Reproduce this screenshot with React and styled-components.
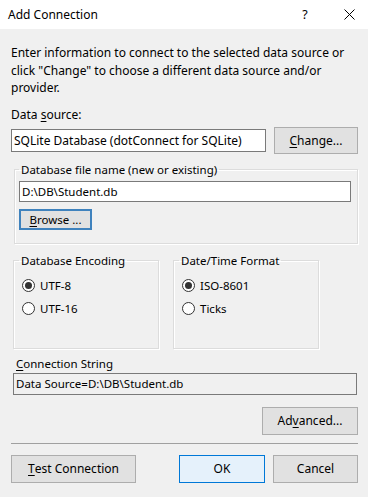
import React from "react";
import styled, { createGlobalStyle } from "styled-components";

const GlobalStyle = createGlobalStyle`
  html, body {
    margin: 0;
    padding: 0;
    background: #f0f0f0;
  }
  * {
    box-sizing: border-box;
  }
`;

const Dialog = styled.div`
  width: 368px;
  height: 497px;
  background: #f0f0f0;
  font-family: "Noto Sans", "Open Sans", sans-serif;
  font-size: 12px;
  color: #000;
  display: flex;
  flex-direction: column;
  overflow: hidden;
`;

const TitleBar = styled.div`
  height: 29px;
  flex: none;
  background: #fff;
  display: flex;
  align-items: center;
  padding-left: 8px;
  padding-right: 4px;
`;

const Title = styled.div`
  flex: 1;
  font-size: 12px;
  white-space: nowrap;
  color: #000;
`;

const TitleButton = styled.div`
  width: 30px;
  height: 29px;
  display: flex;
  align-items: center;
  justify-content: center;
  font-size: 12.5px;
  margin-right: ${(p) => p.$gap || 0}px;
`;

const Body = styled.div`
  padding: 15px 10px 0 11px;
  display: flex;
  flex-direction: column;
`;

const Intro = styled.p`
  margin: 0;
  line-height: 17.5px;
`;

const FieldLabel = styled.div`
  margin-top: ${(p) => p.$top || 0}px;
  line-height: 17px;
  font-size: ${(p) => p.$size || 12}px;
  padding-left: ${(p) => p.$indent || 0}px;
`;

const Row = styled.div`
  display: flex;
  align-items: center;
  justify-content: ${(p) => p.$justify || "flex-start"};
  gap: ${(p) => p.$gap || 0}px;
  margin-top: ${(p) => p.$top || 0}px;
`;

const TextBox = styled.div`
  height: ${(p) => p.$h || 23}px;
  flex: ${(p) => (p.$w ? "none" : "1")};
  width: ${(p) => (p.$w ? `${p.$w}px` : "auto")};
  border: 1px solid #7a7a7a;
  background: ${(p) => (p.$readonly ? "#f0f0f0" : "#fff")};
  display: flex;
  align-items: center;
  padding-left: 2px;
  font-size: ${(p) => p.$size || 12}px;
  white-space: nowrap;
  overflow: hidden;
`;

const Button = styled.div`
  width: ${(p) => p.$w}px;
  height: ${(p) => p.$h || 28}px;
  flex: none;
  background: ${(p) => (p.$primary ? "#e5f1fb" : "#e1e1e1")};
  border: ${(p) => (p.$focus ? "2px solid #3f82bd" : p.$primary ? "1px solid #0078d7" : "1px solid #adadad")};
  display: flex;
  align-items: center;
  justify-content: center;
  font-size: ${(p) => p.$size || 12}px;
`;

const GroupBox = styled.fieldset`
  margin: ${(p) => p.$margin || "0"};
  padding: ${(p) => p.$pad || "0"};
  width: ${(p) => (p.$w ? `${p.$w}px` : "auto")};
  height: ${(p) => p.$h}px;
  border: 1px solid #dcdcdc;
  box-shadow: inset 1px 1px 0 #fff, 1px 1px 0 #fff;
  min-width: 0;
`;

const Legend = styled.legend`
  padding: 0 2px;
  margin-left: ${(p) => p.$offset || 0}px;
  font-size: 11.5px;
  line-height: 14px;
`;

const RadioRow = styled.label`
  display: flex;
  align-items: center;
  gap: 5px;
  height: 23px;
  font-size: 11.5px;
`;

const RadioCircle = styled.span`
  width: 13px;
  height: 13px;
  border-radius: 50%;
  border: 1px solid #333;
  background: #fff;
  display: flex;
  align-items: center;
  justify-content: center;

  &::after {
    content: "";
    width: 7px;
    height: 7px;
    border-radius: 50%;
    background: ${(p) => (p.$checked ? "#333" : "transparent")};
  }
`;

const Separator = styled.div`
  height: 1px;
  background: #a0a0a0;
  margin-top: 8px;
`;

const U = styled.span`
  text-decoration: underline;
  text-underline-offset: 2px;
`;

function Radio({ checked, children }) {
  return (
    <RadioRow>
      <RadioCircle $checked={checked} />
      {children}
    </RadioRow>
  );
}

function CloseIcon() {
  return (
    <svg width="11" height="11" viewBox="0 0 11 11">
      <path d="M0.5 0.5L10.5 10.5M10.5 0.5L0.5 10.5" stroke="#000" strokeWidth="1" />
    </svg>
  );
}

export default function App() {
  return (
    <>
      <GlobalStyle />
      <Dialog>
        <TitleBar>
          <Title>Add Connection</Title>
          <TitleButton $gap={14}>?</TitleButton>
          <TitleButton>
            <CloseIcon />
          </TitleButton>
        </TitleBar>
        <Body>
          <Intro>
            Enter information to connect to the selected data source or click "Change" to choose a different data source and/or provider.
          </Intro>
          <FieldLabel $top={9}>
            Data <U>s</U>ource:
          </FieldLabel>
          <Row $gap={8} $top={4}>
            <TextBox $w={255} $h={23}>SQLite Database (dotConnect for SQLite)</TextBox>
            <Button $w={84} $h={27}>
              <U>C</U>hange...
            </Button>
          </Row>
          <GroupBox $margin="9px 0 0 3px" $pad="4px 6px 0 4px" $h={81}>
            <Legend>Database file name (new or existing)</Legend>
            <TextBox $h={21} $size={11.5}>D:\DB\Student.db</TextBox>
            <Row $top={7}>
              <Button $w={73} $h={21} $size={11.5} $focus>
                <U>B</U>rowse ...
              </Button>
            </Row>
          </GroupBox>
          <Row $gap={14} $top={10}>
            <GroupBox $margin="0 0 0 2px" $pad="6px 6px 0 8px" $w={146} $h={95}>
              <Legend $offset={-3}>Database Encoding</Legend>
              <Radio checked>UTF-8</Radio>
              <Radio>UTF-16</Radio>
            </GroupBox>
            <GroupBox $pad="6px 6px 0 8px" $w={146} $h={95}>
              <Legend $offset={-3}>Date/Time Format</Legend>
              <Radio checked>ISO-8601</Radio>
              <Radio>Ticks</Radio>
            </GroupBox>
          </Row>
          <FieldLabel $top={6} $size={11.5} $indent={5}>
            <U>C</U>onnection String
          </FieldLabel>
          <Row $top={1}>
            <TextBox $readonly $h={22} $size={11.5} style={{ marginLeft: 2, marginRight: 1 }}>
              Data Source=D:\DB\Student.db
            </TextBox>
          </Row>
          <Row $justify="flex-end" $top={12}>
            <Button $w={96} $h={28}>
              Ad<U>v</U>anced...
            </Button>
          </Row>
          <Separator />
          <Row $top={11}>
            <Button $w={125} $h={28}>
              <U>T</U>est Connection
            </Button>
            <Button $w={86} $h={28} $primary style={{ marginLeft: 43 }}>
              OK
            </Button>
            <Button $w={85} $h={28} style={{ marginLeft: 8 }}>
              Cancel
            </Button>
          </Row>
        </Body>
      </Dialog>
    </>
  );
}
